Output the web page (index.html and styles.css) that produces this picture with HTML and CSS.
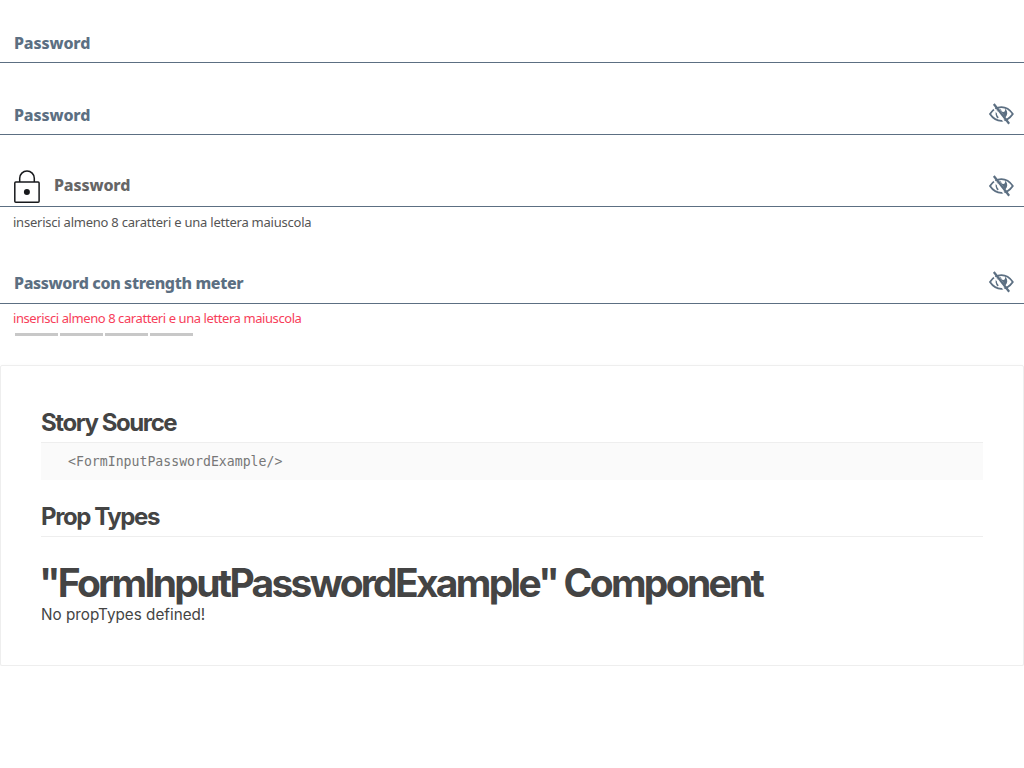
FILE: index.html
```html
<!DOCTYPE html>
<html lang="it">
<head>
<meta charset="utf-8">
<title>Form Input Password</title>
<link rel="stylesheet" href="styles.css">
</head>
<body>
<svg class="defs" width="0" height="0" aria-hidden="true">
  <symbol id="eye-off" viewBox="0 0 26 24">
    <path d="M2 12C5 7.500 8.800 5.200 13.400 5.200S21.700 7.500 24.800 12C21.700 16.500 17.800 18.800 13.400 18.800S5 16.500 2 12Z" fill="none" stroke="currentColor" stroke-width="1.800"/>
    <path d="M9 8.500C7.700 11 8.300 14.200 10.200 15.800" fill="none" stroke="currentColor" stroke-width="1.600"/>
    <path d="M11 6.500L13.200 7.800C13.100 9 14 10 15.200 10C16.600 10 17.500 8.600 16.900 6.900L18 7.500C19.800 9.900 19.700 13.200 17.300 15.400Z" fill="currentColor"/>
    <path d="M4 3.700L19.200 23.400" stroke="#fff" stroke-width="1.600"/>
    <path d="M5.800 2L21.200 21.800" stroke="currentColor" stroke-width="2.200"/>
  </symbol>
</svg>
<form class="form">
  <div class="field"><label class="label">Password</label></div>
  <div class="field"><label class="label">Password</label><svg class="eye"><use href="#eye-off"/></svg></div>
  <div class="field field-icon">
    <svg class="lock" viewBox="0 0 26 34"><path d="M5.700 12V8.300a7.300 7.300 0 0 1 14.600 0V12" fill="none" stroke="#17191c" stroke-width="1.500"/><rect x=".8" y="12" width="24.300" height="20.300" rx="1" fill="none" stroke="#17191c" stroke-width="1.500"/><circle cx="12.900" cy="22" r="3" fill="#17191c"/></svg>
    <label class="label">Password</label><svg class="eye"><use href="#eye-off"/></svg>
  </div>
  <small class="help">inserisci almeno 8 caratteri e una lettera maiuscola</small>
  <div class="field field-meter"><label class="label label-long">Password con strength meter</label><svg class="eye"><use href="#eye-off"/></svg></div>
  <small class="help help-error">inserisci almeno 8 caratteri e una lettera maiuscola</small>
  <div class="meter"><i></i><i></i><i></i><i></i></div>
</form>
<section class="info">
  <h1 class="heading">Story Source</h1>
  <pre class="source">&lt;FormInputPasswordExample/&gt;</pre>
  <h1 class="heading heading-props">Prop Types</h1>
  <h2 class="component">"FormInputPasswordExample" Component</h2>
  <p class="empty">No propTypes defined!</p>
</section>
</body>
</html>
```
FILE: styles.css
```css
* { box-sizing: border-box; }
body { margin: 0; background: #fff; font-family: "Noto Sans", sans-serif; }
.defs { display: block; height: 0; }
.form { height: 365px; padding-top: 23px; }
.field { display: flex; align-items: center; height: 40px; margin-bottom: 32px; padding: 0 10px 0 14px; border-bottom: 1px solid #5c6f82; color: #5c6f82; }
.label { padding-top: 1px; font-size: 16px; font-weight: 800; line-height: 24px; letter-spacing: -.15px; white-space: nowrap; }
.label-long { letter-spacing: -.36px; padding-top: 0; margin-bottom: 2px; }
.eye { width: 26px; height: 24px; margin-left: auto; transform: translateY(-1px); }
.field-icon { margin-bottom: 0; }
.field-icon .label { color: #666; margin-left: 14px; margin-bottom: 5px; }
.lock { width: 26px; height: 34px; }
.help { display: block; height: 24px; padding: 5px 14px 0 13px; font-size: 13px; line-height: 20px; letter-spacing: -.23px; color: #555; white-space: nowrap; }
.field-meter { margin: 33px 0 0; }
.field-meter .eye { transform: translateY(-2px); }
.help-error { padding-top: 4px; letter-spacing: -.42px; color: #f73e5a; }
.meter { display: flex; gap: 2px; margin: 5px 0 0 15px; }
.meter i { width: 43px; height: 3px; background: #c8c8c8; }
.info { height: 301px; padding: 40px; border: 1px solid #eee; border-radius: 2px; box-shadow: 0 2px 4px rgba(0,0,0,.08); color: #444; font-family: Inter, sans-serif; }
.heading { margin: 0; height: 37px; font-size: 24px; font-weight: 700; line-height: 33px; letter-spacing: -1.42px; border-bottom: 1px solid #eee; }
.source { margin: 0; height: 37px; padding: 0 27px; background: #fafafa; color: #777; font: 13.2px/37px "DejaVu Sans Mono", monospace; }
.heading-props { margin-top: 20px; }
.component { margin: 22px 0 0 -2px; font-size: 39px; font-weight: 700; line-height: 48px; letter-spacing: -2.7px; white-space: nowrap; }
.empty { margin: 0; font-size: 15.25px; line-height: 16px; }
```
